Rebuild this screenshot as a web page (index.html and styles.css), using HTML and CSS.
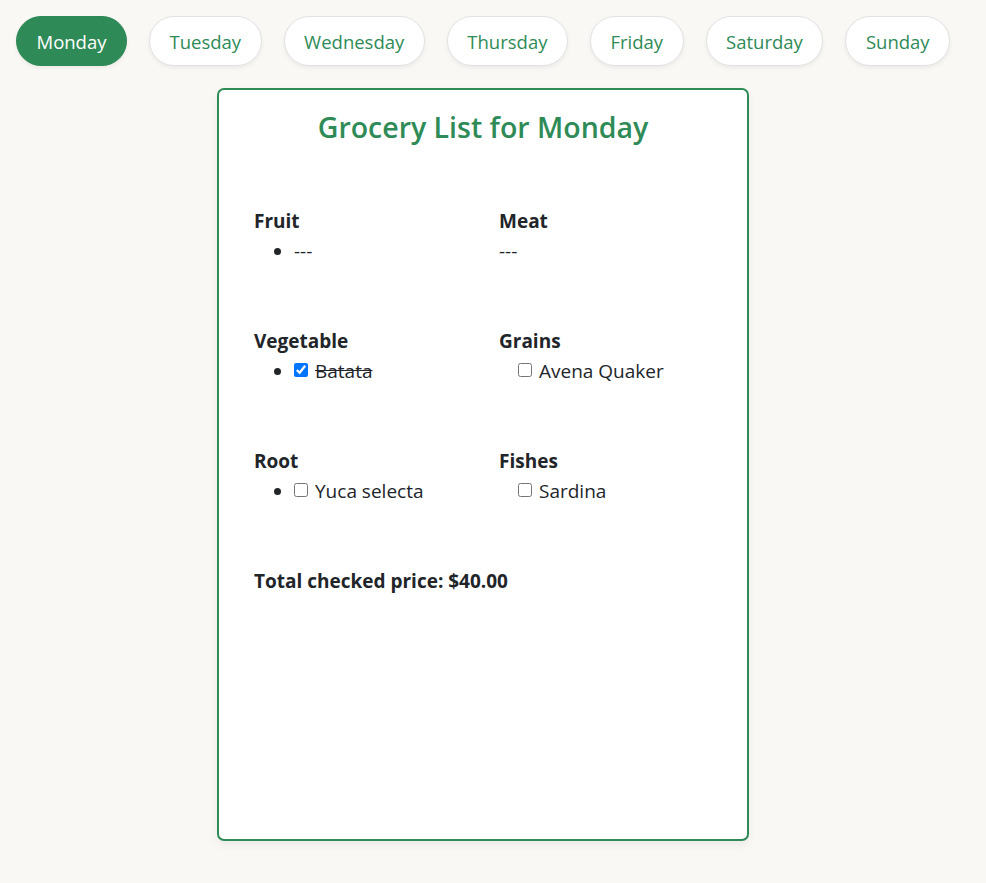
FILE: index.html
```html
<!DOCTYPE html>
<html lang="en">
<head>
<meta charset="utf-8">
<title>Grocery List</title>
<link rel="stylesheet" href="styles.css">
</head>
<body>
  <nav class="days">
    <button class="day active">Monday</button>
    <button class="day">Tuesday</button>
    <button class="day">Wednesday</button>
    <button class="day">Thursday</button>
    <button class="day">Friday</button>
    <button class="day">Saturday</button>
    <button class="day">Sunday</button>
  </nav>
  <main class="main">
    <section class="card">
      <h1 class="title">Grocery List for Monday</h1>
      <div class="grid">
        <div class="cat">
          <h3 class="cat-name">Fruit</h3>
          <ul class="items"><li>---</li></ul>
        </div>
        <div class="cat">
          <h3 class="cat-name">Meat</h3>
          <p class="empty">---</p>
        </div>
        <div class="cat">
          <h3 class="cat-name">Vegetable</h3>
          <ul class="items"><li><label><input type="checkbox" checked><span class="done">Batata</span></label></li></ul>
        </div>
        <div class="cat">
          <h3 class="cat-name">Grains</h3>
          <ul class="items plain"><li><label><input type="checkbox"><span>Avena Quaker</span></label></li></ul>
        </div>
        <div class="cat">
          <h3 class="cat-name">Root</h3>
          <ul class="items"><li><label><input type="checkbox"><span>Yuca selecta</span></label></li></ul>
        </div>
        <div class="cat">
          <h3 class="cat-name">Fishes</h3>
          <ul class="items plain"><li><label><input type="checkbox"><span>Sardina</span></label></li></ul>
        </div>
      </div>
      <p class="total">Total checked price: $40.00</p>
    </section>
  </main>
</body>
</html>
```
FILE: styles.css
```css
* { box-sizing: border-box; }
body {
  margin: 0;
  padding: 16px;
  background: #f9f8f5;
  font-family: "Open Sans", "Noto Sans", sans-serif;
  color: #212529;
}
.days {
  display: flex;
  gap: 22px;
}
.day {
  height: 50px;
  padding: 0 19.5px;
  border: 1px solid #e2e2e2;
  border-radius: 25px;
  background: #fff;
  color: #2e8b57;
  font-family: inherit;
  font-size: 18.5px;
  box-shadow: 0 2px 4px rgba(0,0,0,0.06);
}
.day.active {
  background: #2e8b57;
  border-color: #2e8b57;
  color: #fff;
}
.main {
  display: flex;
  justify-content: center;
  padding-right: 20px;
  margin-top: 22px;
}
.card {
  width: 532px;
  height: 753px;
  background: #fff;
  border: 2px solid #2e8b57;
  border-radius: 7px;
  padding: 17px 35px;
  box-shadow: 0 4px 10px rgba(0,0,0,0.06);
}
.title {
  margin: 0;
  text-align: center;
  color: #2e8b57;
  font-size: 28.5px;
  font-weight: 600;
  line-height: 40px;
}
.grid {
  display: grid;
  grid-template-columns: 245px 1fr;
  row-gap: 60px;
  margin-top: 59px;
}
.cat-name {
  margin: 0;
  font-size: 19px;
  font-weight: 700;
  line-height: 30px;
}
.items {
  margin: 0;
  padding-left: 40px;
  font-size: 19px;
  line-height: 30px;
}
.items.plain {
  list-style: none;
  padding-left: 19px;
}
.items label { display: inline-flex; align-items: center; }
.items input {
  width: 14px;
  height: 14px;
  margin: 0 7px 0 0;
  position: relative;
  top: -1px;
}
.done { text-decoration: line-through; }
.empty {
  margin: 0;
  font-size: 19px;
  line-height: 30px;
}
.total {
  margin: 60px 0 0;
  font-size: 19px;
  font-weight: 700;
  line-height: 30px;
}
```
